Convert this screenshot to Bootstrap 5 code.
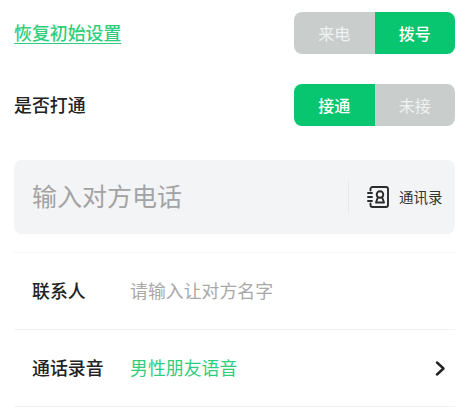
<!doctype html>
<html lang="zh">
<head>
<meta charset="utf-8">
<link href="https://cdn.jsdelivr.net/npm/bootstrap@5.3.0/dist/css/bootstrap.min.css" rel="stylesheet">
<style>
html,body{background:#fff;overflow:hidden}
body{font-family:"Noto Sans CJK SC","Liberation Sans",sans-serif;color:#222;width:467px;height:411px}
.pg{padding:12px 12px 0 14px}
.topln{height:42px}
.reset{color:#2fce7e;font-size:17.9px;font-weight:500;text-decoration:underline;text-underline-offset:3px;line-height:1}
.lbl{font-size:17.9px;font-weight:500;line-height:1;color:#222}
.seg{width:161px;height:42px;border-radius:8px;overflow:hidden}
.seg span{flex:1 1 0;font-size:16px;font-weight:400;color:#fff;background:#c9cecc}
.seg span.on{background:#07c66f;font-weight:500}
.seg span.off{color:#f0f2f1}
.gap1{margin-top:30px}
.phone{height:74px;margin-top:34px;background:#f3f4f6;border-radius:8px;padding-left:18px}
.ph{font-size:25px;color:#a3a3a3;line-height:1;padding-bottom:3px}
.rt{width:107px;height:34px;border-left:1px solid #e8e9ea;padding-left:18px;gap:10px;font-size:14.500px;color:#333}
.rows{margin-top:18px;border-top:1px solid #f6f6f6}
.rw{height:77px;border-bottom:1px solid #f2f2f2;padding-left:18px;padding-right:9px}
.k{width:98px;font-size:17.9px;font-weight:500;color:#222;line-height:1}
.v{font-size:17.9px;line-height:1}
.g{color:#2fce7e}.h{color:#a8a8a8}
</style>
</head>
<body>
<div class="pg">
  <div class="d-flex justify-content-between align-items-center topln">
    <a class="reset" href="#">恢复初始设置</a>
    <div class="seg d-flex">
      <span class="off d-flex align-items-center justify-content-center">来电</span>
      <span class="on d-flex align-items-center justify-content-center">拨号</span>
    </div>
  </div>
  <div class="d-flex justify-content-between align-items-center topln gap1">
    <span class="lbl">是否打通</span>
    <div class="seg d-flex">
      <span class="on d-flex align-items-center justify-content-center">接通</span>
      <span class="off d-flex align-items-center justify-content-center">未接</span>
    </div>
  </div>
  <div class="phone d-flex justify-content-between align-items-center">
    <span class="ph">输入对方电话</span>
    <div class="rt d-flex align-items-center">
      <svg width="22" height="22" viewBox="0 0 22 22" fill="none" stroke="#2b2b2b" stroke-width="1.900" stroke-linecap="round" stroke-linejoin="round"><path d="M3.500 4.500V3a2 2 0 0 1 2-2H19a2 2 0 0 1 2 2v16a2 2 0 0 1-2 2H5.500a2 2 0 0 1-2-2v-1.500"/><path d="M1 7h4M1 11h4M1 15h4"/><circle cx="13" cy="8.500" r="3.300"/><path d="M10.800 11.500 9 16.500h8l-1.800-5"/></svg>
      <span>通讯录</span>
    </div>
  </div>
  <div class="rows">
    <div class="rw d-flex align-items-center">
      <span class="k">联系人</span><span class="v h">请输入让对方名字</span>
    </div>
    <div class="rw d-flex align-items-center">
      <span class="k">通话录音</span><span class="v g flex-grow-1">男性朋友语音</span>
      <svg width="11" height="15" viewBox="0 0 11 15" fill="none" stroke="#222" stroke-width="2.400" stroke-linecap="round" stroke-linejoin="round"><path d="M2 1.500 8.500 7.500 2 13.500"/></svg>
    </div>
  </div>
</div>
<script src="https://cdn.jsdelivr.net/npm/bootstrap@5.3.0/dist/js/bootstrap.bundle.min.js"></script>
</body>
</html>
